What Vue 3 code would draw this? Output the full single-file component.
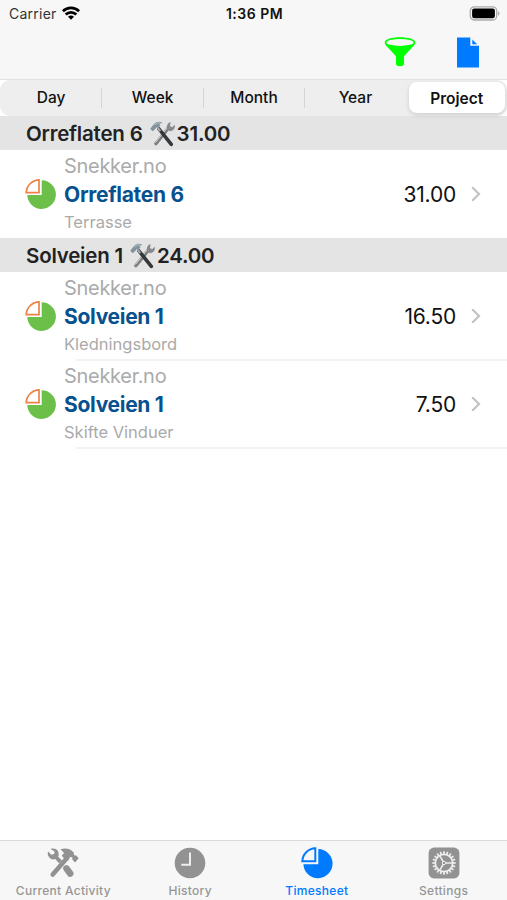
<script setup>
const segments = ['Day', 'Week', 'Month', 'Year', 'Project']
const selected = 'Project'
const sections = [
  {
    name: 'Orreflaten 6', total: '31.00',
    rows: [{ client: 'Snekker.no', project: 'Orreflaten 6', task: 'Terrasse', hours: '31.00' }],
  },
  {
    name: 'Solveien 1', total: '24.00',
    rows: [
      { client: 'Snekker.no', project: 'Solveien 1', task: 'Kledningsbord', hours: '16.50' },
      { client: 'Snekker.no', project: 'Solveien 1', task: 'Skifte Vinduer', hours: '7.50' },
    ],
  },
]
const tabs = [
  { id: 'activity', label: 'Current Activity' },
  { id: 'history', label: 'History' },
  { id: 'timesheet', label: 'Timesheet' },
  { id: 'settings', label: 'Settings' },
]
const teeth = Array.from({ length: 20 }, (_, i) => i * 18)
</script>

<template>
  <div class="screen">
    <header class="top">
      <div class="status">
        <div class="carrier">
          <span>Carrier</span>
          <svg width="18" height="14" viewBox="0 0 18 14" fill="none" stroke="#000" stroke-width="2.7">
            <path d="M.9 5.2a11.5 11.5 0 0 1 16.2 0" />
            <path d="M3.7 8.500a7.500 7.500 0 0 1 10.600 0" />
            <path d="M9 13.800 6 10.800a4.200 4.200 0 0 1 6 0z" fill="#000" stroke="none" />
          </svg>
        </div>
        <span class="time">1:36 PM</span>
        <svg class="battery" width="31" height="15" viewBox="0 0 31 15">
          <rect x="1.300" y=".8" width="26.400" height="13.200" rx="4" fill="#f7f7f7" stroke="#aaa" stroke-width="1.300" />
          <rect x="3.100" y="2.600" width="22.800" height="9.600" rx="2.200" />
          <path d="M29 5.200q3 2.200 0 4.600z" fill="#aaa" />
        </svg>
      </div>
      <div class="actions">
        <svg width="32" height="30" viewBox="0 0 32 30">
          <path d="M.7 5.500C.7 2.500 7 .3 16 .3s15.300 2.200 15.300 5.200c0 1.700-1.200 3-3 4.800l-8.300 9v8c0 2.500-8 2.500-8 0v-8l-8.300-9C1.900 8.500.7 7.200.7 5.500z" fill="#0f0" />
          <ellipse cx="16" cy="5.400" rx="13.600" ry="3.500" fill="#f7f7f7" />
        </svg>
        <svg width="22" height="31" viewBox="0 0 22 31" fill="#007aff">
          <path d="M0 .5h13.300v8.300H22V30.500H0z" />
          <path d="M15.300 2.500v4.700h4.900z" />
        </svg>
      </div>
    </header>
    <nav class="segments">
      <div v-for="s in segments" :key="s" class="segment" :class="{ selected: s === selected }">
        <span>{{ s }}</span>
      </div>
    </nav>
    <main>
      <section v-for="section in sections" :key="section.name">
        <h2>
          <span class="name">{{ section.name }}</span>
          <svg class="tools" width="27" height="28" viewBox="0 0 27 28" fill="none">
            <path d="M19 8.500 7 23.500" stroke="#7d8083" stroke-width="3.600" stroke-linecap="round" />
            <path d="m18.500 7.500-12 15" stroke="#d5d7d8" stroke-width="1" />
            <path d="M18.200 9.200c-1-3 .4-6.200 3.400-7.100l-.6 3.800 2.100 1.400 2.700-2.500c.7 3.200-1.500 6.200-4.700 6.400z" fill="#85898c" />
            <path d="m10 9 12.300 15.400" stroke="#35383b" stroke-width="3.600" stroke-linecap="round" />
            <path d="m8 6.700 3.300 4.500" stroke="#aaa" stroke-width="2" />
            <path d="m1.200 8.700 2.400 2.600 3-2.600 1-2 1.200 1.100 2.700-2-1.200-1.500c.7-.9 1.700-1.300 3.300-1.100-3.200-2.600-6.800-1.700-9 1.300z" fill="#81939c" />
            <path d="m5.500 4.900 3.300-2 2.400-.2" stroke="#b5c2c9" />
          </svg>
          <span class="total">{{ section.total }}</span>
        </h2>
        <article v-for="row in section.rows" :key="row.task" class="row">
          <svg class="pie" width="31" height="31" viewBox="0 0 31 31">
            <path d="M16.700 1.300A14.300 14.300 0 1 1 2.300 16h14.400z" fill="#6cc04a" />
            <path d="M1.200 13.700A13.500 13.500 0 0 1 14 .8v12.900z" fill="#fff" stroke="#ee8245" stroke-width="1.700" />
          </svg>
          <div class="details">
            <span class="client">{{ row.client }}</span>
            <strong>{{ row.project }}</strong>
            <span class="task">{{ row.task }}</span>
          </div>
          <span class="hours">{{ row.hours }}</span>
          <svg class="chevron" width="10" height="16" viewBox="0 0 10 16" fill="none" stroke="#c3c3c6" stroke-width="2.200">
            <path d="m1.200 1.200 6.800 6.800-6.800 6.800" />
          </svg>
        </article>
      </section>
    </main>
    <footer>
      <div v-for="tab in tabs" :key="tab.id" class="tab" :class="{ active: tab.id === 'timesheet' }">
        <svg v-if="tab.id === 'activity'" width="32" height="32" viewBox="0 0 32 32" fill="none">
          <path d="M20.500 10.500 5.700 27.500" stroke="#929292" stroke-width="4.600" stroke-linecap="round" />
          <path d="m9 10 4.500 5" stroke="#929292" stroke-width="4" />
          <path d="m19.500 21.500 3.700 5" stroke="#929292" stroke-width="6.600" stroke-linecap="round" />
          <path d="M3.500 2c3.500-1.200 7.300 0 8 3.500.5 2.500.2 3.800-1.300 5.300-2.500 2.700-7.500 2-9-2-.5-1.500-.6-3-.1-4.300l3.200 3.200 2.800-.6.500-2.600z" fill="#929292" />
          <path d="M13.500 2.300c5-1.700 10.300-.6 13.200 3.300l.4 2.600 2.200.2 2.400 2.800-3.700 4.300-2.700-2.900.1-2-3-.8-3.400 3.200-4.400-4.200 2.500-2.700z" fill="#929292" />
        </svg>
        <svg v-else-if="tab.id === 'history'" width="32" height="32" viewBox="0 0 32 32">
          <circle cx="16" cy="16" r="15.300" fill="#929292" />
          <path d="M16 5.500v12.300H7.300" fill="none" stroke="#eee" stroke-width="2" />
        </svg>
        <svg v-else-if="tab.id === 'timesheet'" width="32" height="32" viewBox="0 0 32 32">
          <path d="M17.300 2A14.600 14.600 0 1 1 2.400 17.200h14.900z" fill="#007aff" />
          <path d="M1.300 14.300A13.500 13.500 0 0 1 14.300 1.300v13z" fill="#f7f7f7" stroke="#007aff" stroke-width="2" />
        </svg>
        <svg v-else width="32" height="32" viewBox="0 0 32 32" fill="none" stroke="#eee">
          <rect x=".6" y=".6" width="30.800" height="30.800" rx="5.500" fill="#929292" stroke="none" />
          <circle cx="16" cy="16" r="8.700" stroke-width="1.700" />
          <path v-for="angle in teeth" :key="angle" d="M16 4.300v3" :transform="`rotate(${angle} 16 16)`" stroke-width="1.700" />
          <path d="M16 16h8.500M16 16l-4.300-7.400M16 16l-4.300 7.400" stroke-width="1.500" />
          <circle cx="16" cy="16" r="1.700" fill="#929292" />
        </svg>
        <span>{{ tab.label }}</span>
      </div>
    </footer>
  </div>
</template>

<style>
body { margin: 0; }
</style>

<style scoped>
* { box-sizing: border-box; }
svg { display: block; flex: none; }
.screen { width: 507px; height: 900px; display: flex; flex-direction: column; background: #fff; color: #111; font-family: Inter, "Liberation Sans", sans-serif; overflow: hidden; }
.top { height: 80px; background: #f7f7f7; border-bottom: 1px solid #e2e2e2; }
.status { height: 27px; display: grid; grid-template-columns: 1fr auto 1fr; align-items: center; padding: 0 7px 0 9px; font-size: 14px; }
.carrier { display: flex; align-items: center; gap: 5px; letter-spacing: .25px; color: #333; }
.carrier svg { margin-top: -2px; }
.time { font-weight: 600; letter-spacing: .5px; }
.battery { justify-self: end; }
.actions { display: flex; justify-content: flex-end; align-items: center; gap: 40.500px; height: 50px; padding-right: 28.500px; }
.segments { height: 36px; display: grid; grid-template-columns: repeat(5, 1fr); background: #eee; border-radius: 10px; font-size: 15.500px; font-weight: 500; }
.segment { position: relative; display: flex; align-items: center; justify-content: center; padding-bottom: 1px; }
.segment:not(.selected) { padding-left: 1px; }
.segment:nth-child(-n+3)::after { content: ""; position: absolute; right: -1px; top: 8px; width: 1px; height: 20px; background: #d5d5d7; }
.segment.selected { margin: 2px 2px 3px 3px; padding: 1px 0 0; background: #fff; border-radius: 8px; box-shadow: 0 2px 5px #0002; font-weight: 600; }
h2 { margin: 0; height: 34px; padding: 1px 0 0 26px; display: flex; align-items: center; background: #e4e4e4; font-size: 20.500px; line-height: 33px; font-weight: 600; color: #222; }
.name { letter-spacing: -.2px; }
.tools { margin-left: 6px; }
.total { margin-left: 1px; letter-spacing: -.2px; }
.row { position: relative; height: 88px; display: flex; align-items: center; padding: 0 26px 0 25px; }
.row::after { content: ""; position: absolute; left: 76px; right: 0; bottom: -1px; height: 2px; background: #f2f2f2; }
section:first-child .row::after { display: none; }
.pie { margin-right: 8px; }
.details { flex: 1; display: flex; flex-direction: column; white-space: nowrap; padding-bottom: 2px; }
.client { font-size: 20px; line-height: 28px; letter-spacing: -.3px; color: #aaa; }
strong { font-size: 21px; line-height: 30px; font-weight: 700; letter-spacing: -.3px; color: #07518f; }
.task { font-size: 16.500px; line-height: 25px; color: #aaa; }
.hours { font-size: 21px; letter-spacing: -.2px; }
.chevron { margin-left: 15px; }
footer { margin-top: auto; height: 60px; display: grid; grid-template-columns: repeat(4, 1fr); background: #f7f7f7; border-top: 1px solid #dadada; }
.tab { display: flex; flex-direction: column; align-items: center; padding-top: 6px; color: #969696; font-size: 12px; line-height: 16px; font-weight: 500; letter-spacing: .3px; }
.tab span { margin-top: 4px; }
.active { color: #007aff; }
</style>
